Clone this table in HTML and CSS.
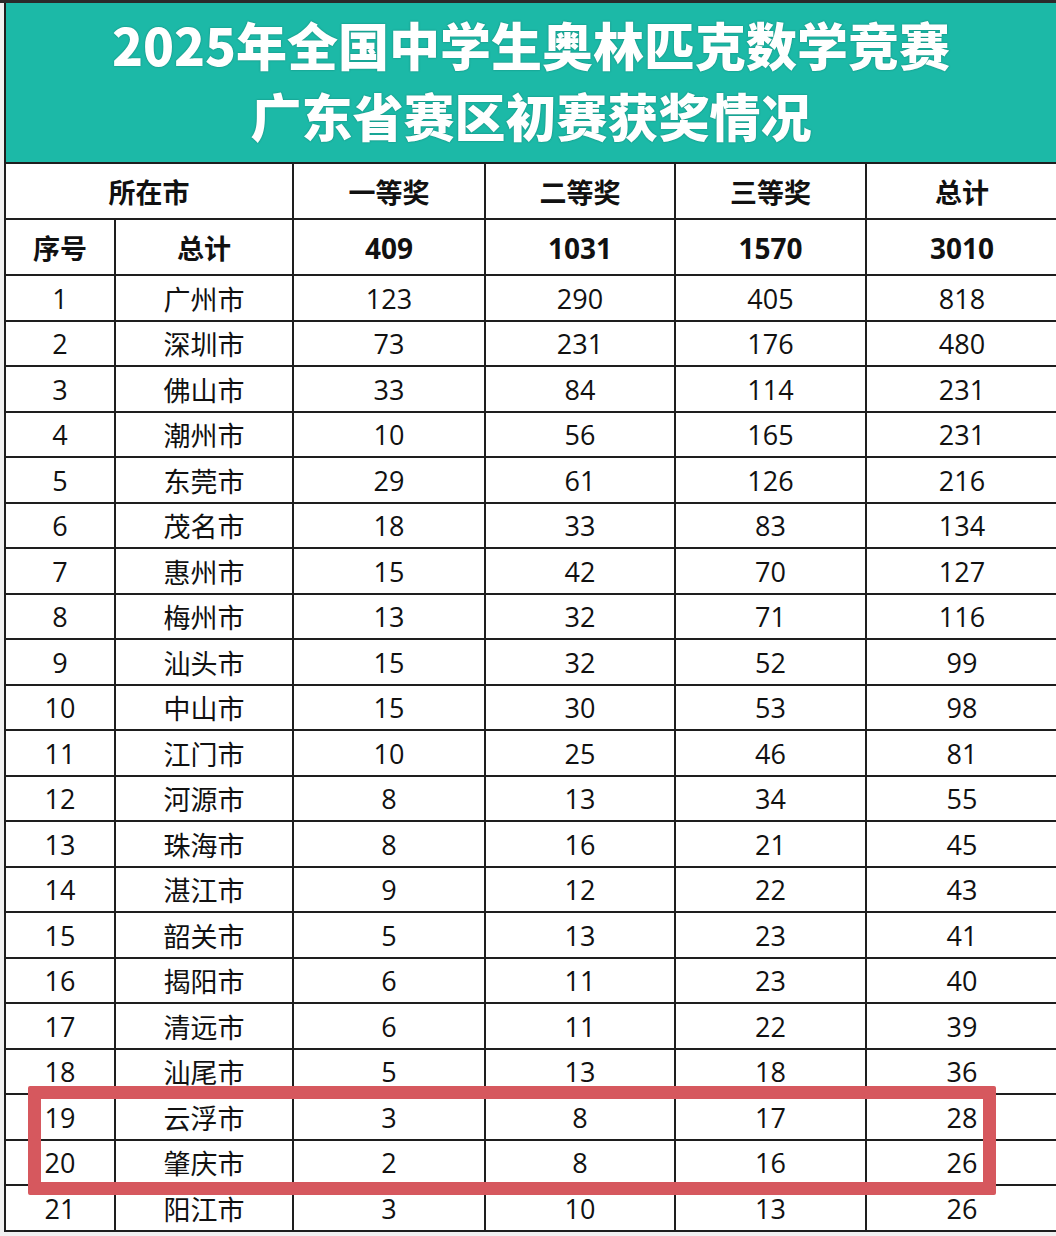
FILE: index.html
```html
<!DOCTYPE html>
<html lang="zh-CN">
<head>
<meta charset="utf-8">
<title>2025年全国中学生奥林匹克数学竞赛 广东省赛区初赛获奖情况</title>
<link rel="stylesheet" href="styles.css">
</head>
<body>
<div class="page">
  <div class="sheet">
    <header class="banner">
      <div class="title-line">2025年全国中学生奥林匹克数学竞赛</div>
      <div class="title-line">广东省赛区初赛获奖情况</div>
    </header>
    <div class="grid">
      <div class="cell head span2">所在市</div>
      <div class="cell head">一等奖</div>
      <div class="cell head">二等奖</div>
      <div class="cell head">三等奖</div>
      <div class="cell head">总计</div>

      <div class="cell head">序号</div>
      <div class="cell head">总计</div>
      <div class="cell head num">409</div>
      <div class="cell head num">1031</div>
      <div class="cell head num">1570</div>
      <div class="cell head num">3010</div>

      <div class="cell">1</div><div class="cell city">广州市</div><div class="cell">123</div><div class="cell">290</div><div class="cell">405</div><div class="cell">818</div>
      <div class="cell">2</div><div class="cell city">深圳市</div><div class="cell">73</div><div class="cell">231</div><div class="cell">176</div><div class="cell">480</div>
      <div class="cell">3</div><div class="cell city">佛山市</div><div class="cell">33</div><div class="cell">84</div><div class="cell">114</div><div class="cell">231</div>
      <div class="cell">4</div><div class="cell city">潮州市</div><div class="cell">10</div><div class="cell">56</div><div class="cell">165</div><div class="cell">231</div>
      <div class="cell">5</div><div class="cell city">东莞市</div><div class="cell">29</div><div class="cell">61</div><div class="cell">126</div><div class="cell">216</div>
      <div class="cell">6</div><div class="cell city">茂名市</div><div class="cell">18</div><div class="cell">33</div><div class="cell">83</div><div class="cell">134</div>
      <div class="cell">7</div><div class="cell city">惠州市</div><div class="cell">15</div><div class="cell">42</div><div class="cell">70</div><div class="cell">127</div>
      <div class="cell">8</div><div class="cell city">梅州市</div><div class="cell">13</div><div class="cell">32</div><div class="cell">71</div><div class="cell">116</div>
      <div class="cell">9</div><div class="cell city">汕头市</div><div class="cell">15</div><div class="cell">32</div><div class="cell">52</div><div class="cell">99</div>
      <div class="cell">10</div><div class="cell city">中山市</div><div class="cell">15</div><div class="cell">30</div><div class="cell">53</div><div class="cell">98</div>
      <div class="cell">11</div><div class="cell city">江门市</div><div class="cell">10</div><div class="cell">25</div><div class="cell">46</div><div class="cell">81</div>
      <div class="cell">12</div><div class="cell city">河源市</div><div class="cell">8</div><div class="cell">13</div><div class="cell">34</div><div class="cell">55</div>
      <div class="cell">13</div><div class="cell city">珠海市</div><div class="cell">8</div><div class="cell">16</div><div class="cell">21</div><div class="cell">45</div>
      <div class="cell">14</div><div class="cell city">湛江市</div><div class="cell">9</div><div class="cell">12</div><div class="cell">22</div><div class="cell">43</div>
      <div class="cell">15</div><div class="cell city">韶关市</div><div class="cell">5</div><div class="cell">13</div><div class="cell">23</div><div class="cell">41</div>
      <div class="cell">16</div><div class="cell city">揭阳市</div><div class="cell">6</div><div class="cell">11</div><div class="cell">23</div><div class="cell">40</div>
      <div class="cell">17</div><div class="cell city">清远市</div><div class="cell">6</div><div class="cell">11</div><div class="cell">22</div><div class="cell">39</div>
      <div class="cell">18</div><div class="cell city">汕尾市</div><div class="cell">5</div><div class="cell">13</div><div class="cell">18</div><div class="cell">36</div>
      <div class="cell">19</div><div class="cell city">云浮市</div><div class="cell">3</div><div class="cell">8</div><div class="cell">17</div><div class="cell">28</div>
      <div class="cell">20</div><div class="cell city">肇庆市</div><div class="cell">2</div><div class="cell">8</div><div class="cell">16</div><div class="cell">26</div>
      <div class="cell">21</div><div class="cell city">阳江市</div><div class="cell">3</div><div class="cell">10</div><div class="cell">13</div><div class="cell">26</div>
    </div>
    <div class="highlight"></div>
  </div>
</div>
</body>
</html>
```

FILE: styles.css
```css
html, body {
  margin: 0;
  padding: 0;
  background: #ffffff;
}

body {
  width: 1056px;
  height: 1236px;
  overflow: hidden;
  font-family: "Open Sans", "Noto Sans CJK SC", sans-serif;
  color: #111111;
}

.page {
  border-top: 3px solid #2a2a2a;
  height: 1233px;
  background: #f1f1f1;
}

.sheet {
  position: relative;
  margin-left: 4px;
  border-left: 2px solid #1e1e1e;
  width: 1060px;
}

.banner {
  box-sizing: border-box;
  height: 159px;
  background: #1cb9a7;
  display: flex;
  flex-direction: column;
  align-items: center;
  justify-content: center;
  padding-right: 10px;
  padding-bottom: 6px;
}

.title-line {
  font-family: "Noto Sans CJK SC", sans-serif;
  font-weight: 900;
  font-size: 51px;
  line-height: 71px;
  color: #ffffff;
  text-shadow: 0 0 2px rgba(0, 60, 50, 0.45);
  white-space: nowrap;
}

.grid {
  display: grid;
  grid-template-columns: 110px 178px 192px 190px 191px 190px 9px;
  grid-template-rows: 56px 56px repeat(21, 45.5px);
  border-top: 2px solid #1e1e1e;
  background: #ffffff;
}

.cell {
  box-sizing: border-box;
  grid-column: span 1;
  border-right: 2px solid #1e1e1e;
  border-bottom: 2px solid #1e1e1e;
  display: flex;
  align-items: center;
  justify-content: center;
  font-size: 27px;
  line-height: 1;
  padding-top: 1px;
}

.grid > .cell:nth-child(6n+5) {
  grid-column: span 2;
  border-right: none;
  padding-right: 9px;
}

.city {
  font-family: "Noto Sans CJK SC", sans-serif;
  font-size: 27px;
}

.head {
  font-family: "Noto Sans CJK SC", sans-serif;
  font-weight: 700;
  font-size: 27px;
}

.head.num {
  font-family: "Open Sans", "Noto Sans CJK SC", sans-serif;
  font-size: 28px;
  font-weight: 700;
}

.grid > .span2 {
  grid-column: span 2;
}

.highlight {
  position: absolute;
  left: 22px;
  top: 1083px;
  width: 942px;
  height: 83px;
  border: 13px solid #d6585e;
  border-radius: 2px;
}
```
